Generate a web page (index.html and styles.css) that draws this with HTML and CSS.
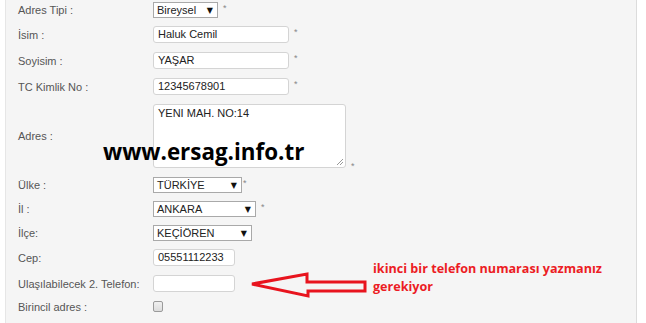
FILE: index.html
```html
<!DOCTYPE html>
<html lang="tr">
<head>
<meta charset="utf-8">
<link rel="stylesheet" href="styles.css">
</head>
<body>
<div class="panel">
  <form class="form">
    <div class="row r-sel">
      <label class="lbl">Adres Tipi :</label>
      <span class="select w64"><span class="val">Bireysel</span><span class="caret">▼</span></span>
      <span class="req">*</span>
    </div>
    <div class="row r-in">
      <label class="lbl">İsim :</label>
      <span class="input w136">Haluk Cemil</span>
      <span class="req">*</span>
    </div>
    <div class="row r-in">
      <label class="lbl">Soyisim :</label>
      <span class="input w136">YAŞAR</span>
      <span class="req">*</span>
    </div>
    <div class="row r-in">
      <label class="lbl">TC Kimlik No :</label>
      <span class="input w136">12345678901</span>
      <span class="req">*</span>
    </div>
    <div class="row r-ta">
      <label class="lbl">Adres :</label>
      <span class="textarea">YENI MAH. NO:14<span class="grip"></span></span>
      <span class="req req-bottom">*</span>
    </div>
    <div class="row r-sel">
      <label class="lbl">Ülke :</label>
      <span class="select w89"><span class="val">TÜRKİYE</span><span class="caret">▼</span></span>
      <span class="req tight">*</span>
    </div>
    <div class="row r-sel">
      <label class="lbl">İl :</label>
      <span class="select w103"><span class="val">ANKARA</span><span class="caret">▼</span></span>
      <span class="req">*</span>
    </div>
    <div class="row r-sel">
      <label class="lbl">İlçe:</label>
      <span class="select w99"><span class="val">KEÇİÖREN</span><span class="caret">▼</span></span>
    </div>
    <div class="row r-in">
      <label class="lbl">Cep:</label>
      <span class="input w82">05551112233</span>
    </div>
    <div class="row r-in">
      <label class="lbl">Ulaşılabilecek 2. Telefon:</label>
      <span class="input w82"></span>
    </div>
    <div class="row r-chk">
      <label class="lbl">Birincil adres :</label>
      <span class="checkbox"></span>
    </div>
  </form>
  <div class="watermark">www.ersag.info.tr</div>
  <svg class="arrow" width="122" height="30" viewBox="0 0 122 30">
    <polygon points="2,14 57,4 57,12 115,12 115,21 58,21 58,26 2,14" fill="none" stroke="#e8141e" stroke-width="3" stroke-linejoin="miter"/>
  </svg>
  <div class="note">ikinci bir telefon numarası yazmanız<br>gerekiyor</div>
</div>
</body>
</html>
```
FILE: styles.css
```css
html, body {
  margin: 0;
  padding: 0;
  background: #ffffff;
}
body {
  font-family: "Liberation Sans", Arial, sans-serif;
  font-size: 11px;
  color: #555;
}
.panel {
  position: relative;
  margin-left: 5px;
  width: 630px;
  height: 323px;
  background: #f5f5f5;
  border-left: 1px solid #e6e6e6;
  border-right: 1px solid #dcdcdc;
}
.form {
  display: flex;
  flex-direction: column;
  gap: 9px;
  padding: 2px 0 0 12px;
  margin: 0;
}
.row {
  display: flex;
  align-items: center;
}
.r-sel { height: 16px; }
.r-in { height: 17px; }
.r-ta { height: 64px; align-items: center; }
.r-chk { height: 11px; }
.r-sel + .r-sel { margin-top: -1px; }
.r-sel + .r-in { margin-top: -1px; }
.lbl {
  width: 135px;
  flex: none;
  color: #555;
  font-size: 11px;
}
.req {
  color: #888;
  font-size: 9px;
  margin-left: 5px;
  align-self: flex-start;
  margin-top: 1px;
}
.req.tight { margin-left: 1px; }
.req-bottom { align-self: flex-end; margin-bottom: -3px; }
.input {
  box-sizing: border-box;
  height: 17px;
  background: #fff;
  border: 1px solid #d4d4d4;
  border-radius: 3px;
  padding: 0 4px;
  color: #222;
  font-size: 11px;
  line-height: 15px;
}
.select {
  box-sizing: border-box;
  height: 16px;
  background: #fff;
  border: 1px solid #a9a9a9;
  display: flex;
  align-items: center;
  justify-content: space-between;
  padding: 0 4px 0 3px;
  color: #222;
  font-size: 11px;
}
.caret {
  font-family: "DejaVu Sans", sans-serif;
  font-size: 8px;
  color: #111;
}
.w64 { width: 65px; }
.w89 { width: 89px; }
.w103 { width: 103px; }
.w99 { width: 99px; }
.w136 { width: 136px; }
.w82 { width: 82px; }
.textarea {
  position: relative;
  box-sizing: border-box;
  width: 193px;
  height: 64px;
  align-self: flex-start;
  background: #fff;
  border: 1px solid #d4d4d4;
  border-radius: 3px;
  padding: 2px 4px;
  color: #222;
  font-size: 11px;
  line-height: 13px;
}
.grip {
  position: absolute;
  right: 2px;
  bottom: 2px;
  width: 6px;
  height: 6px;
  background: linear-gradient(135deg, transparent 45%, #999 45%, #999 55%, transparent 55%, transparent 70%, #999 70%, #999 80%, transparent 80%);
}
.checkbox {
  box-sizing: border-box;
  width: 10px;
  height: 11px;
  border: 1px solid #9a9a9a;
  border-radius: 2px;
  background: linear-gradient(#f0f0f0, #dcdcdc);
}
.watermark {
  position: absolute;
  left: 97px;
  top: 136px;
  font-family: "Open Sans", "Noto Sans", sans-serif;
  font-weight: 700;
  font-size: 22.4px;
  color: #000;
}
.arrow {
  position: absolute;
  left: 244px;
  top: 270px;
}
.note {
  position: absolute;
  left: 367px;
  top: 260px;
  font-family: "Open Sans", "Noto Sans", sans-serif;
  font-weight: 700;
  font-size: 12.6px;
  line-height: 18px;
  color: #ec1c24;
}
```
